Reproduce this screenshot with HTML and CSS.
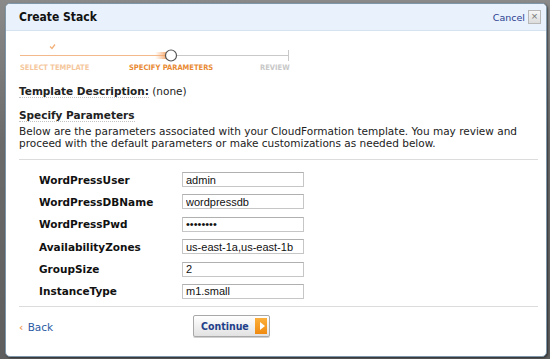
FILE: index.html
```html
<!DOCTYPE html>
<html lang="en">
<head>
    <meta charset="UTF-8">
    <title>Create Stack</title>
    <link rel="stylesheet" href="styles.css">
</head>
<body>
    <div class="dialog">
        <div class="dialog-header">
            <div class="dialog-title">Create Stack</div>
            <div class="header-actions">
                <a href="#" class="cancel-link">Cancel</a>
                <span class="close-box">&#215;</span>
            </div>
        </div>
        <div class="dialog-body">
            <div class="steps">
                <svg class="steps-track" width="272" height="22" viewBox="0 0 272 22">
                    <defs>
                        <linearGradient id="glow" x1="0" x2="1" y1="0" y2="0">
                            <stop offset="0" stop-color="#f7b27a" stop-opacity="0"/>
                            <stop offset="1" stop-color="#f39a55" stop-opacity="0.9"/>
                        </linearGradient>
                    </defs>
                    <path d="M31 5.5 L33 7.5 L36 3.5" fill="none" stroke="#f3b27c" stroke-width="1.3"/>
                    <line x1="1" y1="14.5" x2="146" y2="14.5" stroke="#f4b98a" stroke-width="1"/>
                    <rect x="136" y="11" width="12" height="7" fill="url(#glow)"/>
                    <line x1="158" y1="14.5" x2="270" y2="14.5" stroke="#c9c9c9" stroke-width="1"/>
                    <line x1="269.5" y1="9" x2="269.5" y2="20" stroke="#c9c9c9" stroke-width="1"/>
                    <circle cx="152" cy="14.5" r="5.5" fill="#fff" stroke="#555" stroke-width="1.2"/>
                </svg>
                <div class="step-labels">
                    <span class="step done">SELECT TEMPLATE</span>
                    <span class="step current">SPECIFY PARAMETERS</span>
                    <span class="step todo">REVIEW</span>
                </div>
            </div>

            <p class="template-desc"><span class="help-term">Template Description:</span> (none)</p>

            <h3 class="section-title"><span class="help-term">Specify Parameters</span></h3>
            <p class="intro">Below are the parameters associated with your CloudFormation template. You may review and proceed with the default parameters or make customizations as needed below.</p>

            <div class="params">
                <label>WordPressUser</label><input type="text" value="admin">
                <label>WordPressDBName</label><input type="text" value="wordpressdb">
                <label>WordPressPwd</label><input type="password" value="password">
                <label>AvailabilityZones</label><input type="text" value="us-east-1a,us-east-1b">
                <label>GroupSize</label><input type="text" value="2">
                <label>InstanceType</label><input type="text" value="m1.small">
            </div>

            <div class="dialog-footer">
                <a href="#" class="back-link"><span class="chev">&#8249;</span> Back</a>
                <button class="continue-btn">Continue <span class="arrow-box"></span></button>
            </div>
        </div>
    </div>
</body>
</html>
```

FILE: styles.css
```css
body {
    margin: 0;
    padding: 0;
    background: linear-gradient(#8a8a8a, #6a6a6a 40%, #5e5e5e);
    font-family: "DejaVu Sans", Verdana, sans-serif;
    color: #222;
    height: 359px;
    overflow: hidden;
}
/* Dialog */
.dialog {
    box-sizing: border-box;
    width: 542px;
    height: 354px;
    margin: 3px 0 0 5px;
    background-color: #fff;
    border: 1px solid #7f97aa;
    border-radius: 5px;
    overflow: hidden;
    box-shadow: 1px 1px 2px rgba(0, 0, 0, 0.5);
}
.dialog-header {
    height: 26px;
    background-color: #e8f1fc;
    border-bottom: 1px solid #d5e2f0;
    display: flex;
    justify-content: space-between;
    align-items: center;
    padding: 0 5px 0 13px;
}
.dialog-title {
    font-family: "DejaVu Sans Condensed", "DejaVu Sans", sans-serif;
    font-size: 12px;
    font-weight: bold;
    color: #111;
}
.header-actions {
    display: flex;
    align-items: center;
    gap: 3px;
}
.cancel-link {
    font-size: 9.5px;
    color: #2c3e91;
    text-decoration: none;
}
.close-box {
    width: 11px;
    height: 12px;
    border: 1px solid #b8b8b8;
    background: linear-gradient(#f6f6f6, #dcdcdc);
    color: #777;
    font-size: 11px;
    line-height: 11px;
    text-align: center;
    font-family: "Liberation Sans", sans-serif;
}
.dialog-body {
    padding: 0 8px 0 13px;
}
/* Steps */
.steps {
    width: 272px;
    margin-top: 10px;
}
.steps-track {
    display: block;
}
.step-labels {
    position: relative;
    height: 12px;
    font-family: "DejaVu Sans Condensed", "DejaVu Sans", sans-serif;
    font-size: 7.5px;
    font-weight: bold;
}
.step {
    position: absolute;
    top: 0;
    white-space: nowrap;
}
.step.done {
    left: 1px;
    color: #f5c79c;
}
.step.current {
    left: 110px;
    color: #e98a33;
}
.step.todo {
    left: 241px;
    color: #c8c8c8;
}
/* Text */
.template-desc {
    margin: 10px 0 0;
    font-size: 10.5px;
}
.help-term {
    font-weight: bold;
    border-bottom: 1px dotted #c4c4c4;
}
.section-title {
    margin: 12px 0 0;
    font-size: 10.5px;
}
.intro {
    margin: 4px 0 0;
    font-size: 10.5px;
    line-height: 12px;
    padding-bottom: 10px;
    border-bottom: 1px solid #dcdcdc;
}
/* Parameters */
.params {
    display: grid;
    grid-template-columns: 143px 122px;
    row-gap: 7.4px;
    align-items: center;
    padding: 12px 0 7px 20px;
    border-bottom: 1px solid #dcdcdc;
}
.params label {
    font-size: 10.5px;
    font-weight: bold;
    color: #111;
}
.params input {
    box-sizing: border-box;
    width: 122px;
    height: 15px;
    margin: 0;
    padding: 0 3px;
    border: 1px solid #c6c6c6;
    border-top-color: #b0b0b0;
    font-family: "Liberation Sans", Arial, sans-serif;
    font-size: 11px;
    color: #111;
    outline: none;
}
/* Footer */
.dialog-footer {
    display: flex;
    align-items: center;
    padding-top: 8px;
}
.back-link {
    width: 174px;
    font-size: 10.5px;
    color: #2b5aa3;
    text-decoration: none;
    padding-top: 3px;
}
.chev {
    color: #f0a060;
    font-weight: bold;
    margin-right: 1px;
}
.continue-btn {
    display: flex;
    align-items: center;
    gap: 6px;
    width: 77px;
    height: 22px;
    padding: 0 2px 0 7px;
    border: 1px solid #a8a8a8;
    border-radius: 2px;
    background: linear-gradient(#ffffff, #e2e2e2);
    font-family: "DejaVu Sans Condensed", "DejaVu Sans", sans-serif;
    font-size: 10.5px;
    font-weight: bold;
    color: #1f3f8a;
    box-shadow: 0 1px 0 #d0d0d0;
}
.arrow-box {
    position: relative;
    width: 14px;
    height: 16px;
    background: linear-gradient(#fbb03b, #f08a10);
}
.arrow-box::after {
    content: "";
    position: absolute;
    left: 5px;
    top: 4px;
    border-left: 5px solid #fff;
    border-top: 4px solid transparent;
    border-bottom: 4px solid transparent;
}
```
